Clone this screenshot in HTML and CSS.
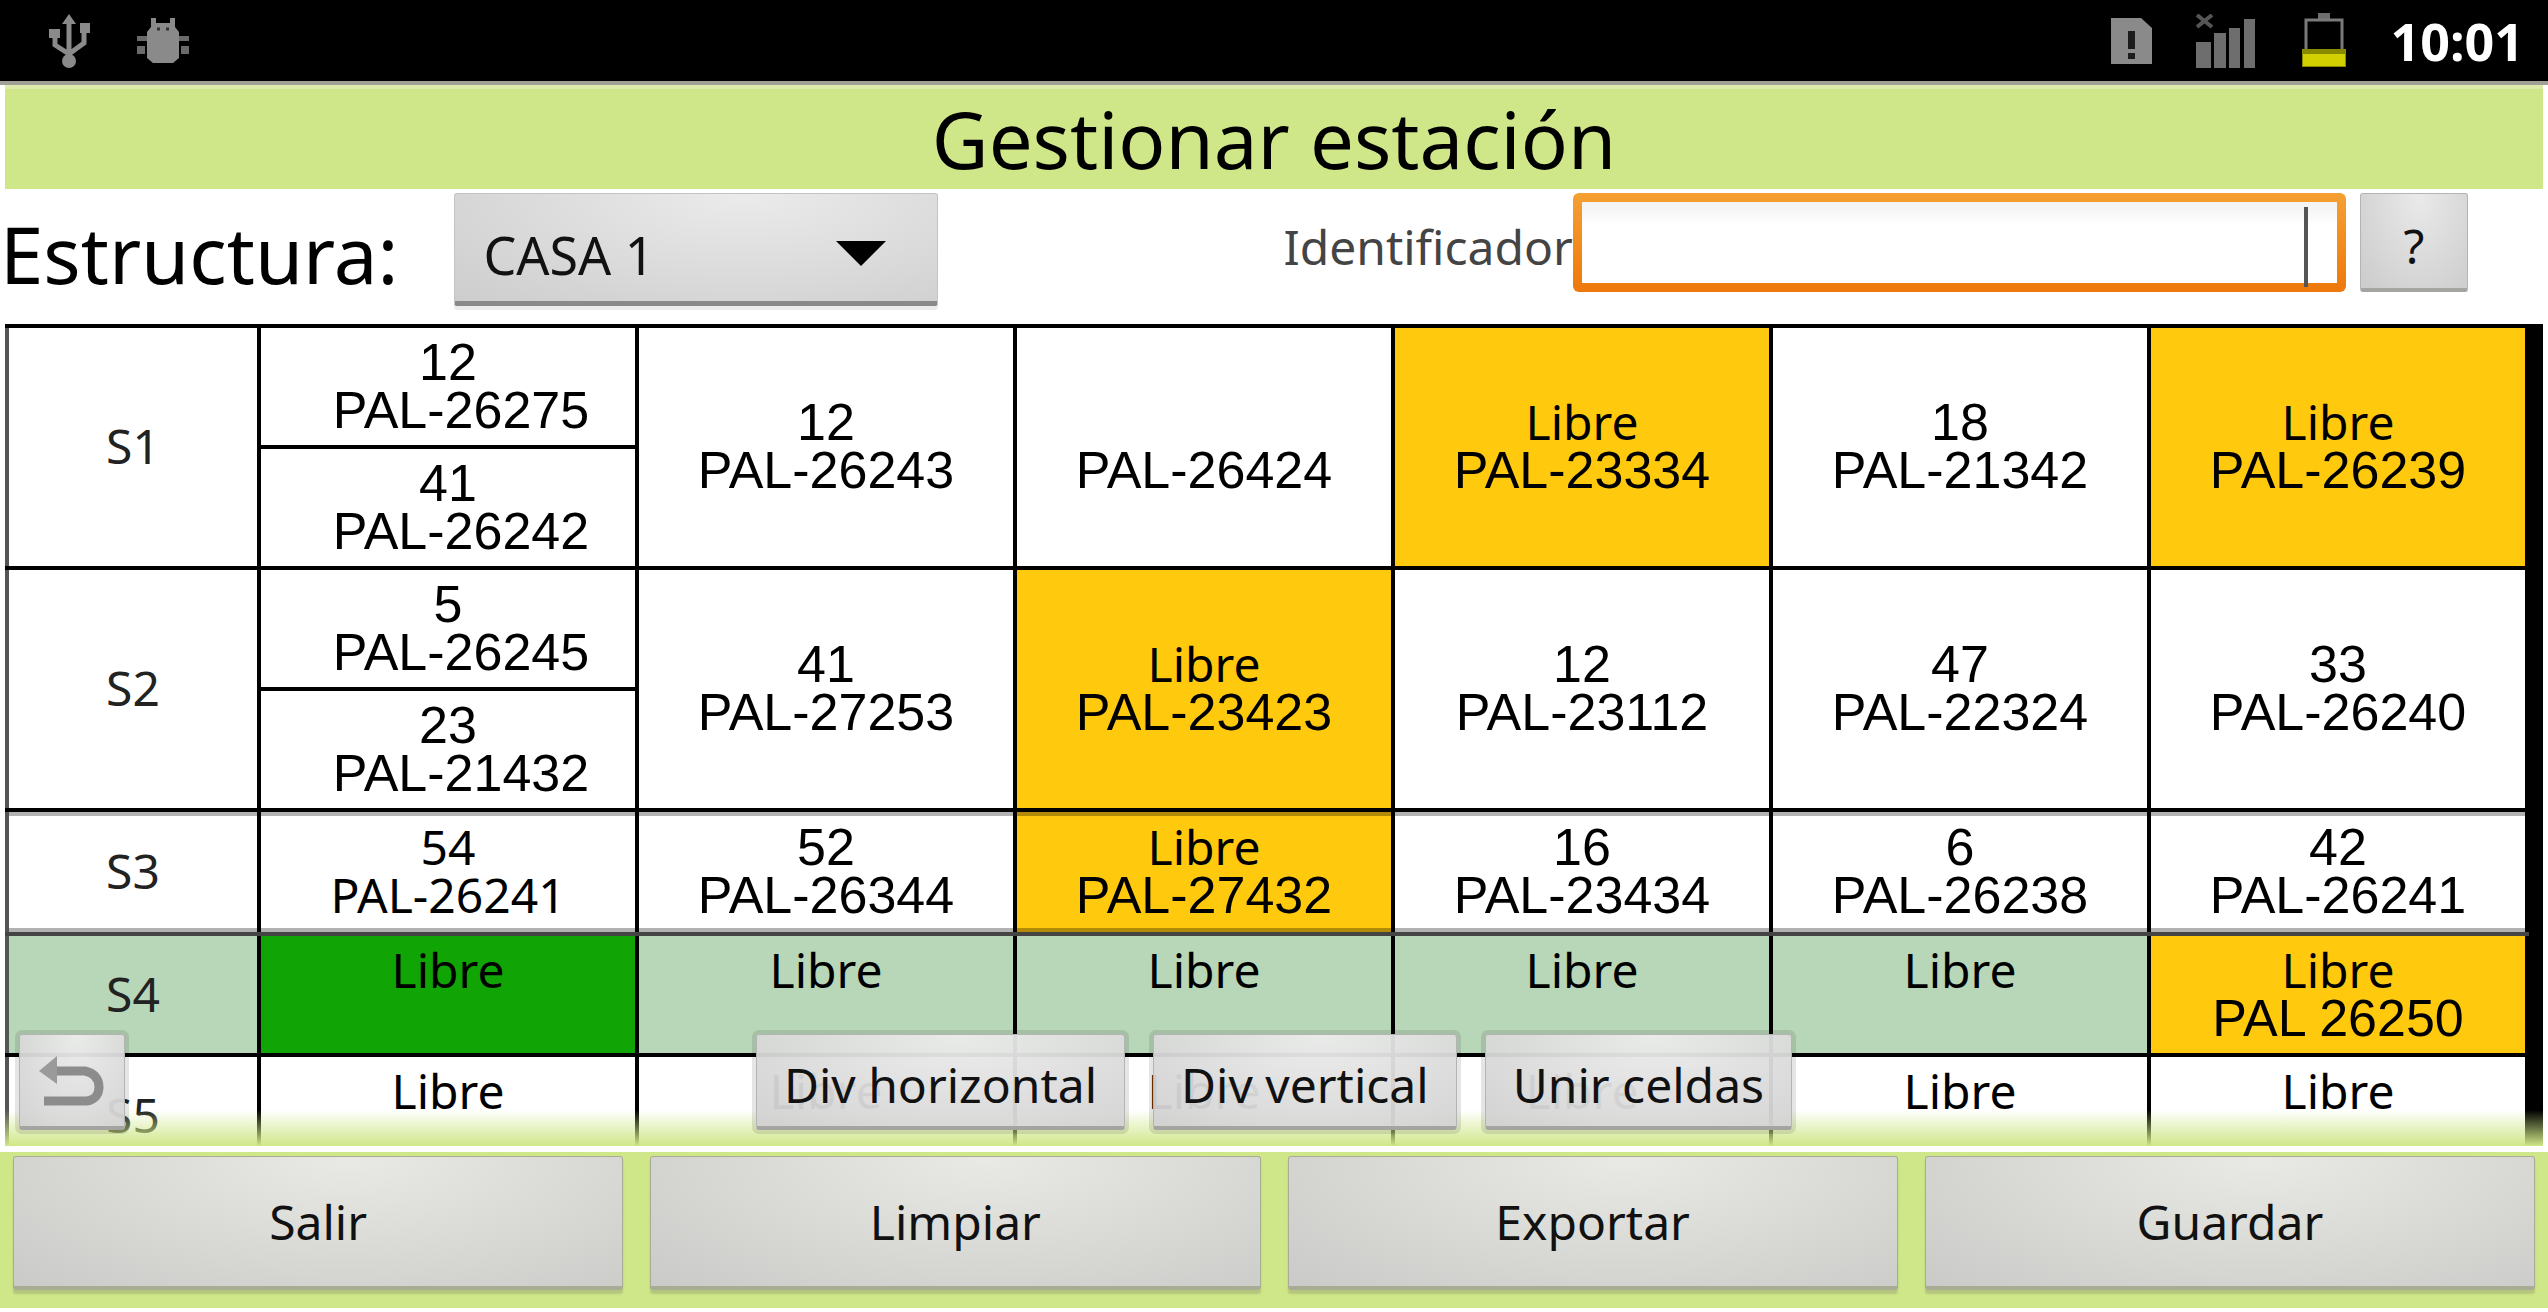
FILE: index.html
```
<!DOCTYPE html>
<html lang="es">
<head>
  <meta charset="UTF-8">
  <meta name="viewport" content="width=device-width, initial-scale=1.0">
  <title>Gestionar estación</title>
  <link rel="stylesheet" href="styles.css">
</head>
<body>
  <!-- Status bar -->
  <div class="status-bar">
    <svg class="icon-usb" viewBox="0 0 44 54" aria-hidden="true">
      <path d="M22 8V44M22 40L8 31V20M22 40L37 29V18" fill="none" stroke="#8a8a8a" stroke-width="5"/>
      <path d="M22 0L29 10H15ZM2 15H13V24H2ZM33 9H43V19H33Z" fill="#8a8a8a"/>
      <circle cx="22" cy="47" r="7" fill="#8a8a8a"/>
    </svg>
    <svg class="icon-bug" viewBox="0 0 52 46" aria-hidden="true">
      <path d="M14 0H19V5H33V0H38V9L42 14V40L36 45H16L10 40V14L14 9Z" fill="#8a8a8a"/>
      <path d="M0 18H10V23H0ZM42 18H52V23H42ZM0 28H8V36H0ZM44 28H52V36H44Z" fill="#6a6a6a"/>
      <path d="M20 11H23M29 11H32" stroke="#333" stroke-width="3"/>
    </svg>
    <div class="status-right">
      <svg class="icon-sd" viewBox="0 0 42 46" aria-hidden="true">
        <path d="M0 0H30L41 10V46H0Z" fill="#8a8a8a"/>
        <path d="M17 13H24V31H17ZM17 35H24V41H17Z" fill="#1c1c1c"/>
      </svg>
      <svg class="icon-signal" viewBox="0 0 62 54" aria-hidden="true">
        <path d="M1 1L16 13M16 1L1 13" stroke="#555" stroke-width="4"/>
        <path d="M0 28H15V54H0ZM18 19H30V54H18ZM33 14H44V54H33ZM48 5H59V54H48Z" fill="#6e6e6e"/>
      </svg>
      <svg class="icon-battery" viewBox="0 0 46 56" aria-hidden="true">
        <path d="M17 0H29V6H17Z" fill="#6e6e6e"/>
        <path d="M5 42V7H41V42" fill="none" stroke="#7a7a7a" stroke-width="3"/>
        <path d="M1 36H45V54H1Z" fill="#8a8a00"/>
        <path d="M2 41H44V53H2Z" fill="#d2d000"/>
      </svg>
      <time class="clock">10:01</time>
    </div>
  </div>

  <h1 class="title">Gestionar estación</h1>

  <!-- Structure selector and search -->
  <div class="toolbar">
    <div class="structure">
      <label class="structure-label" for="structure">Estructura:</label>
      <div class="select-wrap">
        <select id="structure" class="select">
          <option>CASA 1</option>
        </select>
      </div>
    </div>
    <div class="search">
      <label class="search-label" for="identifier">Identificador</label>
      <div class="input-wrap">
        <input id="identifier" class="input" type="text">
        <span class="caret" aria-hidden="true"></span>
      </div>
      <button class="button help" type="button">?</button>
    </div>
  </div>

  <!-- Station grid -->
  <main class="station">
    <table class="grid">
      <colgroup>
        <col class="col-label">
        <col span="6">
      </colgroup>
      <tbody>
        <tr>
          <th rowspan="2" scope="row">S1</th>
          <td class="split"><span>12</span><span>PAL-26275</span></td>
          <td rowspan="2"><span>12</span><span>PAL-26243</span></td>
          <td rowspan="2"><span></span><span>PAL-26424</span></td>
          <td rowspan="2" class="reserved"><span class="free">Libre</span><span>PAL-23334</span></td>
          <td rowspan="2"><span>18</span><span>PAL-21342</span></td>
          <td rowspan="2" class="reserved"><span class="free">Libre</span><span>PAL-26239</span></td>
        </tr>
        <tr>
          <td class="split"><span>41</span><span>PAL-26242</span></td>
        </tr>
        <tr>
          <th rowspan="2" scope="row">S2</th>
          <td class="split"><span>5</span><span>PAL-26245</span></td>
          <td rowspan="2"><span>41</span><span>PAL-27253</span></td>
          <td rowspan="2" class="reserved"><span class="free">Libre</span><span>PAL-23423</span></td>
          <td rowspan="2"><span>12</span><span>PAL-23112</span></td>
          <td rowspan="2"><span>47</span><span>PAL-22324</span></td>
          <td rowspan="2"><span>33</span><span>PAL-26240</span></td>
        </tr>
        <tr>
          <td class="split"><span>23</span><span>PAL-21432</span></td>
        </tr>
        <tr class="single">
          <th scope="row">S3</th>
          <td><span class="free">54</span><span class="free">PAL-26241</span></td>
          <td><span>52</span><span>PAL-26344</span></td>
          <td class="reserved"><span class="free">Libre</span><span>PAL-27432</span></td>
          <td><span>16</span><span>PAL-23434</span></td>
          <td><span>6</span><span>PAL-26238</span></td>
          <td><span>42</span><span>PAL-26241</span></td>
        </tr>
        <tr class="active">
          <th scope="row">S4</th>
          <td class="selected"><span class="free">Libre</span><span></span></td>
          <td><span class="free">Libre</span><span></span></td>
          <td><span class="free">Libre</span><span></span></td>
          <td><span class="free">Libre</span><span></span></td>
          <td><span class="free">Libre</span><span></span></td>
          <td class="reserved"><span class="free">Libre</span><span>PAL 26250</span></td>
        </tr>
        <tr>
          <th scope="row">S5</th>
          <td><span class="free">Libre</span><span></span></td>
          <td><span class="free">Libre</span><span></span></td>
          <td><span class="free">Libre</span><span></span></td>
          <td><span class="free">Libre</span><span></span></td>
          <td><span class="free">Libre</span><span></span></td>
          <td><span class="free">Libre</span><span></span></td>
        </tr>
      </tbody>
    </table>

    <div class="fade"></div>

    <!-- Floating cell actions -->
    <button class="button floating undo" type="button" aria-label="Deshacer">
      <svg class="icon-undo" viewBox="0 0 66 54" aria-hidden="true">
        <path d="M14 15H46C56 17 60 24 60 31C60 38 56 44 48 45H5" fill="none" stroke="#8c8c8c" stroke-width="9"/>
        <path d="M0 15L18 0V28Z" fill="#9a9a9a"/>
      </svg>
    </button>
    <div class="cell-actions">
      <button class="button floating" type="button">Div horizontal</button>
      <button class="button floating" type="button">Div vertical</button>
      <button class="button floating" type="button">Unir celdas</button>
    </div>
  </main>

  <footer class="footer">
    <button class="button" type="button">Salir</button>
    <button class="button" type="button">Limpiar</button>
    <button class="button" type="button">Exportar</button>
    <button class="button" type="button">Guardar</button>
  </footer>
</body>
</html>
```
FILE: styles.css
```
:root {
  --color-green: #cfe788;
  --color-row: #b8d6b8;
  --color-selected: #11a405;
  --color-reserved: #ffc90e;
  --font-ui: 'Noto Sans', 'Open Sans', sans-serif;
  --font-code: 'Liberation Sans', Arial, sans-serif;
  --text-normal: 48px;
  --text-medium: 52px;
  --text-large: 78px;
}

* {
  margin: 0;
  padding: 0;
  box-sizing: border-box;
}

body {
  display: flex;
  flex-direction: column;
  height: 100vh;
  background: #fff;
  color: #000;
  font-family: var(--font-ui);
  font-size: var(--text-normal);
  overflow: hidden;
}

button,
input,
select {
  font: inherit;
  color: #111;
}

/* Status bar */
.status-bar {
  display: flex;
  align-items: center;
  gap: 46px;
  height: 85px;
  padding: 0 24px 0 47px;
  background: #000;
  border-bottom: 4px solid #a0a098;
}

.status-right {
  display: flex;
  align-items: center;
  gap: 43px;
  margin-left: auto;
}

.icon-usb { width: 44px; height: 54px; }
.icon-bug { width: 52px; height: 46px; }
.icon-sd { width: 42px; height: 46px; }
.icon-signal { width: 62px; height: 54px; }
.icon-battery { width: 46px; height: 56px; }

.clock {
  color: #fff;
  font-size: var(--text-medium);
  font-weight: 700;
  line-height: 80px;
}

.title {
  margin: 0 5px;
  background: var(--color-green);
  border-top: 4px solid #dcebaa;
  font-size: var(--text-large);
  font-weight: 400;
  line-height: 100px;
  text-align: center;
}

/* Toolbar */
.toolbar {
  display: flex;
  align-items: flex-start;
  justify-content: space-between;
  height: 135px;
  padding: 4px 80px 0 0;
}

.structure,
.search {
  display: flex;
  align-items: center;
}

.structure {
  gap: 56px;
}

.search {
  width: 48%;
}

.structure-label,
.search-label {
  padding-top: 8px;
}

.structure-label {
  font-size: var(--text-large);
  line-height: 100px;
}

.search-label {
  color: #444;
}

.select-wrap {
  position: relative;
}

.select-wrap::after {
  content: '';
  position: absolute;
  top: 48px;
  right: 52px;
  border: 25px solid transparent;
  border-top: 25px solid #000;
  border-bottom: 0;
  pointer-events: none;
}

.select {
  appearance: none;
  display: block;
  width: 484px;
  height: 113px;
  padding: 14px 80px 0 28px;
  border: 1px solid #c4c4c4;
  border-bottom: 5px solid #8a8a8a;
  border-radius: 3px;
  background: radial-gradient(ellipse at 60% 0, #ebebeb, #cdcdcd);
  box-shadow: 0 4px 0 #ececec;
  font-size: var(--text-medium);
}

.input-wrap {
  position: relative;
  flex: 1;
}

.input {
  display: block;
  width: 100%;
  height: 99px;
  padding: 0 32px;
  border: 9px solid transparent;
  border-radius: 6px;
  background:
    linear-gradient(#f2f2f2, #fff 24px) padding-box,
    linear-gradient(#f6a032, #ee780b) border-box;
  text-align: right;
  outline: none;
}

.caret {
  position: absolute;
  top: 14px;
  right: 38px;
  width: 4px;
  height: 80px;
  background: #555;
}

/* Buttons */
.button {
  border: 1px solid #b4b4b4;
  border-bottom: 4px solid #a4a4a0;
  border-radius: 3px;
  background: radial-gradient(ellipse at 55% 0, #eaeaea, #cbcbcb);
  color: #111;
}

.help {
  width: 108px;
  height: 99px;
  margin-left: 14px;
  padding-top: 8px;
}

/* Station grid */
.station {
  position: relative;
  flex: 1;
  min-height: 0;
  margin: 0 5px;
  padding-right: 14px;
  background: #000;
  overflow: hidden;
}

.grid {
  width: 100%;
  table-layout: fixed;
  border-collapse: collapse;
  background: #fff;
  line-height: 48px;
  text-align: center;
}

.col-label {
  width: 252px;
}

.grid tr {
  height: 121px;
}

.grid .single {
  height: 124px;
}

.grid th,
.grid td {
  border: 4px solid #000;
  padding-bottom: 2px;
  vertical-align: middle;
}

.grid th {
  border-left-color: #555;
  color: #222;
  font-weight: 400;
}

.grid td {
  font-family: var(--font-code);
  font-size: var(--text-medium);
}

.grid span {
  display: block;
  height: 48px;
}

.grid .free {
  font-family: var(--font-ui);
  font-size: var(--text-normal);
}

.split span:last-child {
  padding-left: 26px;
}

.active {
  background: var(--color-row);
}

.single th,
.single td {
  border-top-color: #555;
  border-bottom-color: #444;
  box-shadow: inset 0 4px rgba(0, 0, 0, 0.3), inset 0 -4px rgba(0, 0, 0, 0.3);
}

.reserved {
  background: var(--color-reserved);
}

.selected {
  background: var(--color-selected);
}

.fade {
  position: absolute;
  right: 0;
  bottom: 0;
  left: 0;
  height: 36px;
  background: linear-gradient(rgba(207, 231, 136, 0), var(--color-green));
}

.floating {
  height: 96px;
  padding: 8px 27px 0;
  background: radial-gradient(ellipse at 55% 0, rgba(236, 236, 236, 0.95), rgba(208, 208, 208, 0.95));
  box-shadow: 0 0 0 4px rgba(0, 0, 0, 0.1);
}

.undo {
  position: absolute;
  bottom: 16px;
  left: 14px;
  width: 106px;
  padding: 4px 0 0;
}

.icon-undo {
  display: block;
  width: 66px;
  height: 54px;
  margin: 0 auto;
}

.cell-actions {
  position: absolute;
  right: 0;
  bottom: 16px;
  left: 0;
  display: flex;
  justify-content: center;
  gap: 28px;
}

/* Footer */
.footer {
  display: grid;
  grid-template-columns: repeat(4, 1fr);
  gap: 27px;
  margin: 6px 0 4px;
  padding: 4px 13px 18px;
  background: var(--color-green);
}

.footer .button {
  height: 134px;
  border-color: #a8ac94;
  background: radial-gradient(ellipse at 55% 0, #e9eae5, #cacbc8);
  box-shadow: 0 4px 2px #b4c67c;
}
```
